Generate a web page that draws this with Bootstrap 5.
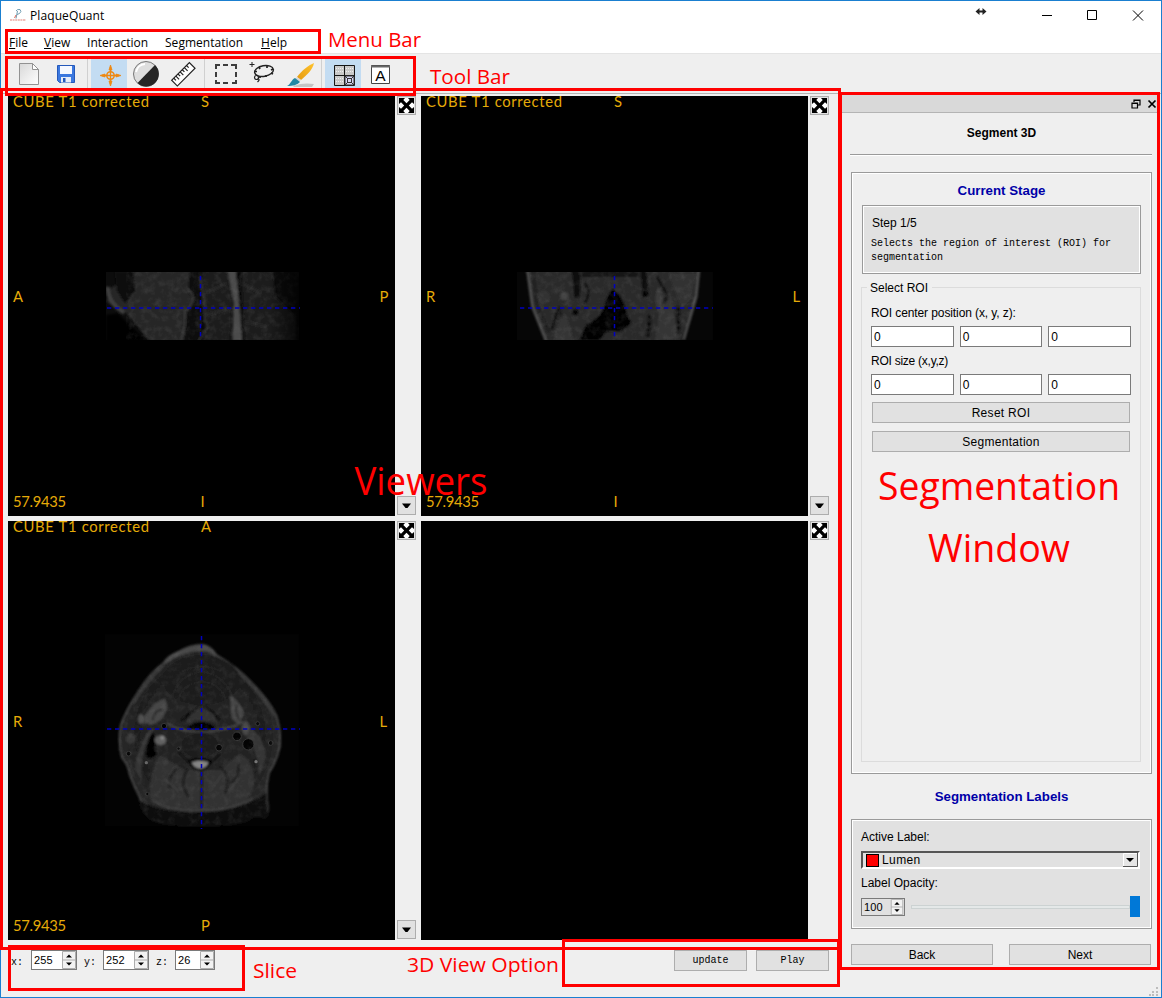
<!DOCTYPE html>
<html lang="en">
<head>
<meta charset="utf-8">
<title>PlaqueQuant</title>
<meta name="viewport" content="width=device-width, initial-scale=1">
<link href="https://cdn.jsdelivr.net/npm/bootstrap@5.3.0/dist/css/bootstrap.min.css" rel="stylesheet">
<style>
body{width:1162px;height:998px;overflow:hidden;background:#fff;font:12px/16px "Liberation Sans",Arial,sans-serif;color:#000}
svg{display:block}
.win{width:1162px;height:998px;border:1px solid #1a7fd0;background:#efefef}
.titlebar{height:29px;background:#fff;padding-left:9px;font-family:"Open Sans","Noto Sans",sans-serif}
.menus{height:23px;background:#fff;font-family:"Open Sans","Noto Sans",sans-serif;padding-left:8px;padding-top:3px}
.menus span{letter-spacing:.03px;white-space:nowrap}
.tools{height:41px;border-top:1px solid #e4e4e4;border-bottom:1px solid #b5b5b5;padding:5px 0 0 10px;gap:1px}
.tool{width:36px;height:30px}
.tool.on{background:#c3dcf2}
.vsep{width:1px;height:30px;background:#d0d0d0;margin:0 2px}
.views{width:838px;padding-top:2px;padding-left:7px}
.viewrow{height:420px;margin-bottom:5px}
.viewrow.low{height:419px;margin-bottom:0}
.side{width:26px;padding:0 0 1px 1.500px}
.sq{width:19px;height:19px;border:1px solid #adadad;background:#e1e1e1}
.mono{font-family:"Liberation Mono","DejaVu Sans Mono",monospace;font-size:10px}
.slicebar{height:31px;padding:10px 10px 0 3px}
.spin{height:20px;border:1px solid #7a7a7a;background:#fff;font-size:11px;letter-spacing:.15px;padding-left:2px}
.wbtn{height:21px;border:1px solid #adadad;background:#e1e1e1;border-radius:0;padding:1px 0 0;color:#000;font-size:12px;line-height:18px}
.wbtn.wide{letter-spacing:.3px}
.dock{width:317px}
.dockbar{height:18px;background:#d9d9d9;border-bottom:1px solid #b4b4b4;padding-right:2px;margin-top:1px;gap:6px}
.dockbody{padding:0 7px 0 9px}
.rule{height:2px;background:#9a9a9a;border-bottom:1px solid #fff;width:302px;margin-left:-1px}
.sunk{border:1px solid #9a9a9a;outline:1px solid #fff;outline-offset:-2px}
.hd{font-weight:700;font-size:13.3px;color:#0000a8;text-align:center}
.stepbox{background:#e1e1e1;height:69px;padding:9px 8px 0}
.group{position:relative;border:1px solid #dcdcdc;height:475px;padding:17px 9px 0;margin:13px 0 0 -1px}
.legendtxt{position:absolute;left:5px;top:-8px;background:#efefef;padding:0 4px 0 3px;line-height:16px}
.inp{height:21px;border:1px solid #7a7a7a;border-radius:0;background:#fff;padding:0 0 0 2px;line-height:20px;flex:1}
.labels{background:#e1e1e1;height:110px;padding:9px 10px 0 9px}
.combo{height:18px;border:2px solid;border-color:#555 #fff #fff #555;background:#e1e1e1;width:279px;line-height:15px}
.swatch{width:13px;height:13px;background:#f00;border:1px solid #000;margin:0 3px 0 3px}
.over{position:absolute;left:0;top:0;pointer-events:none}
.over text{font-family:"Open Sans","Noto Sans",sans-serif;fill:#f00}
.cv text{font-family:Lato,sans-serif;font-size:14.8px;fill:#e6ab08}
.cross{stroke:#0000c0;stroke-width:1.5;stroke-dasharray:4.3 3.7}
</style>
</head>
<body>
<svg width="0" height="0" style="position:absolute">
<defs>
<filter id="soft" x="-10%" y="-10%" width="120%" height="120%"><feGaussianBlur stdDeviation="2.500"/></filter>
<filter id="grain" x="0" y="0" width="100%" height="100%"><feTurbulence type="fractalNoise" baseFrequency=".05" numOctaves="4" seed="8"/><feColorMatrix values="0 0 0 0 .3  0 0 0 0 .3  0 0 0 0 .3  1.8 0 0 0 -.75"/></filter>
<linearGradient id="metal" x1="0" y1="0" x2="1" y2="1"><stop offset="0" stop-color="#d8d8d8"/><stop offset="1" stop-color="#fff"/></linearGradient>
<linearGradient id="bris" x1="1" y1="0" x2="0" y2="1"><stop offset="0" stop-color="#ffc32d"/><stop offset="1" stop-color="#e59a10"/></linearGradient>
<radialGradient id="tissue"><stop offset="0" stop-color="#262626"/><stop offset=".8" stop-color="#1f1f1f"/><stop offset="1" stop-color="#2a2a2a"/></radialGradient>
<linearGradient id="edge"><stop offset="0" stop-color="#000" stop-opacity="0"/><stop offset="1" stop-color="#000" stop-opacity=".75"/></linearGradient>
<clipPath id="cSag"><rect x="33" y="36" width="579" height="204"/></clipPath>
<clipPath id="cCor"><rect x="36" y="36" width="588" height="204"/></clipPath>
<clipPath id="cNeck"><path d="M64 36h520l-10 75-24 75-18 54H120L80 140z"/></clipPath>
<path id="head" d="M205 112Q215 92 250 78Q290 54 325 58Q350 62 365 88Q430 125 475 175Q525 225 546 270Q562 320 557 365Q548 410 524 445Q514 490 520 535Q524 575 508 579Q490 570 475 577Q440 603 320 602Q210 605 165 583Q135 560 133 520Q115 485 102 450Q98 420 79 400Q65 350 75 300Q90 255 130 195Q165 140 205 112Z"/>
<clipPath id="cHead"><use href="#head"/></clipPath>
<symbol id="expand" viewBox="0 0 17 17"><path d="M1 1h15v15H1z" fill="#fff"/><path d="M1 1h6L5.300 3 8.500 6.200 11.700 3 10 1h6v6l-2-1.700-3.200 3.200L14 11.700 16 10v6h-6l1.700-2-3.200-3.200L5.300 14 7 16H1v-6l2 1.700 3.200-3.200L3 5.300 1 7z"/></symbol>
<symbol id="down" viewBox="0 0 17 17"><path d="M4 6.500h9L9.500 11h-2z"/></symbol>
<symbol id="updown" viewBox="0 0 14 18"><path d="M.5.500h13v17H.5zM.5 9h13" fill="#f2f2f2" stroke="#adadad"/><path d="M4 6.500 7 3.500l3 3zM4 11.500l3 3 3-3z"/></symbol>
</defs>
</svg>

<div class="win d-flex flex-column">
  <header class="titlebar d-flex align-items-center">
    <svg width="16" height="16" viewBox="0 0 16 16" fill="none"><path d="M6 3q1-2 4-1.500 2 2-.5 4L7 6.500M7.500 3 6 10.500" stroke="#6f9db2" stroke-width="1"/><path d="M6 7 4.500 10" stroke="#df6a5c"/><path d="M0 12h16" stroke="#ecaaa4" stroke-dasharray="2 .6" stroke-width="1.500"/></svg>
    <span style="margin-left:4px;letter-spacing:.1px">PlaqueQuant</span>
    <svg class="ms-auto" width="186" height="28" viewBox="970 1 186 28" fill="none" stroke="#000"><path d="M978 10.500h6" stroke-width="2" stroke="#222"/><path d="m979.500 7-4 3.500 4 3.500zM982.500 7l4 3.500-4 3.500z" fill="#222" stroke="none"/><path d="M1042 14.500h10M1087.500 9.500h9v9h-9zM1133 9.500l10 10m0-10-10 10"/></svg>
    <i style="width:5px"></i>
  </header>
  <nav class="menus d-flex align-items-center">
    <span style="width:35px"><u>F</u>ile</span><span style="width:43px"><u>V</u>iew</span><span style="width:78px">Interaction</span><span style="width:96px">Segmentation</span><span><u>H</u>elp</span>
  </nav>
  <div class="tools d-flex">
    <div class="tool"><svg width="36" height="30" viewBox="11 59 36 30"><path d="M19.500 63.500h13l6 6v15h-19z" fill="url(#metal)" stroke="#929292"/><path d="M32.500 63.500v6h6z" fill="#fff" stroke="#929292"/></svg></div>
    <div class="tool"><svg width="36" height="30" viewBox="48 59 36 30"><path d="M57.500 65.500h17v17h-15l-2-2z" fill="#3b78df" stroke="#2458ba"/><path d="M60 66h12v8H60z" fill="#f5f8ff"/><path d="M61 77h10v5.500H61z" fill="#e7edf8"/><path d="M63 78h2.500v4H63z" fill="#2458ba"/></svg></div>
    <i class="vsep"></i>
    <div class="tool on"><svg width="36" height="30" viewBox="91 59 36 30" fill="none" stroke="#ee8812"><circle cx="110.500" cy="75.500" r="3.700" stroke-width="1.500"/><path d="M110.500 67v17M102 75.500h17" stroke-width="1.300"/><path d="m109 70 1.500-5 1.500 5zm0 11 1.500 5 1.500-5zm-4-7-5 1.500 5 1.500zm11 0 5 1.500-5 1.500z" fill="#ee8812" stroke-width=".8"/></svg></div>
    <div class="tool"><svg width="36" height="30" viewBox="128 59 36 30"><circle cx="146" cy="74" r="12.500" fill="#dedede" stroke="#777"/><path d="M155 65A12.500 12.500 0 0 1 137.500 83z" fill="#262626"/><path d="M136 72a10 10 0 0 1 9-8" fill="none" stroke="#fff" stroke-width="2"/></svg></div>
    <div class="tool"><svg width="36" height="30" viewBox="165 59 36 30"><g transform="rotate(-45 183 74)" fill="#fff" stroke="#222" stroke-width="1.200"><path d="M170.500 70.500h25v8h-25z"/><path d="M173.500 70.500v3m3-3v4.500m3-4.500v3m3-3v4.500m3-4.500v3m3-3v4.500m3-4.500v3"/></g></svg></div>
    <i class="vsep"></i>
    <div class="tool"><svg width="36" height="30" viewBox="208 59 36 30" fill="none" stroke="#3d3d3d" stroke-width="2"><path d="M216 69v-4h4m3 0h5m3 0h5v4m0 3v5m0 3v3h-4m-4 0h-5m-3 0h-4v-3m0-3v-5"/></svg></div>
    <div class="tool"><svg width="36" height="30" viewBox="245 59 36 30" fill="none" stroke="#222"><path d="M249.500 64.500h5M252 62v5"/><ellipse cx="264" cy="71" rx="9.500" ry="5.300" transform="rotate(-10 264 71)" stroke-width="1.400"/><circle cx="256.500" cy="77.500" r="2" stroke-width="1.200"/><path d="M258 78.500c2 1 1 2-.5 3.500" stroke-width="1.200"/><path d="M254 71.500h3m2-4.500 1 2m7-3v2m6 1-2 1m0 3 2 1m-7 1v2m-6-1v2" stroke-width="1.700"/></svg></div>
    <div class="tool"><svg width="36" height="30" viewBox="282 59 36 30"><path d="M293 86c8-3 15-3 21-2l-2 3h-18z" fill="#c5c5c5"/><path d="M314 63c-5 2-12 7-17 14l4 3c6-5 12-11 13-17z" fill="url(#bris)"/><path d="m297 77 4 3-2 2-4-3z" fill="#d9d9d9"/><path d="M295 78l5 4c-3 3-7 4-13 4 4-2 4-6 8-8z" fill="#2387a4"/></svg></div>
    <i class="vsep"></i>
    <div class="tool on"><svg width="36" height="30" viewBox="325 59 36 30" fill="none" stroke="#161616"><path d="M334.500 65.500h20v20h-20z" fill="#c9c9c9"/><path d="M336 68.500h18M336 71.500h18M336 78.500h8M336 81.500h8" stroke="#eee" stroke-dasharray="1 1"/><path d="M344.500 65v20M334 75.500h20"/><path d="M345 76h9v9h-9z" fill="#d5d5f3" stroke="#333"/><path d="M347.500 78.500h4v4h-4zM345 76l3 3m6-3-3 3m3 6-3-3m-6 3 3-3" stroke="#333"/></svg></div>
    <div class="tool"><svg width="36" height="30" viewBox="362 59 36 30"><path d="M371.500 65.500h18v18h-18z" fill="#fff" stroke="#444"/><path d="M371 66.500h19" stroke="#666" stroke-width="2"/><text x="380.500" y="81" text-anchor="middle" font-size="15.500" font-family="Liberation Sans, sans-serif">A</text></svg></div>
  </div>

  <div class="d-flex flex-grow-1">
    <main class="views">
      <div class="viewrow d-flex">
        <svg class="cv" width="387" height="420" viewBox="8 96 387 420"><path d="M8 96h387v420H8z"/>
          <g transform="translate(95 260) scale(.33333)"><g clip-path="url(#cSag)">
            <path d="M33 36h579v204H33z" fill="#0c0c0c"/>
            <g filter="url(#soft)"><path d="M110 30h180l-8 70 18 30-28 50-4 65H165L95 160 35 125 45 85 90 60z" fill="#262626"/><path d="M38 80q0 50 50 78" stroke="#404040" stroke-width="12" fill="none"/><path d="M60 36h55l5 55-30 40-25-40z" fill="#0e0e0e"/><path d="M320 30h80l12 80-6 135H325l10-60z" fill="#1e1e1e"/><path d="M286 30l-6 50 16 30-20 50-4 85h38l16-70-6-70-4-75z" fill="#080808"/><path d="M316 50l12 80 2 50 8 20-28 45" fill="none" stroke="#393939" stroke-width="5"/><path d="M280 90q24 20 8 45l-18 20v40l-12 45" fill="none" stroke="#393939" stroke-width="6"/><path d="M438 30h95l10 80 60 60v75H448z" fill="#1a1a1a"/><path d="M335 100l60-30M335 165l65-20M440 70l60 30M445 185l70 15" stroke="#272727" stroke-width="10"/><path d="M398 30l18 100-4 112h30l-10-112-10-100z" fill="#4b4b4b"/><path d="M425 30l12 100 10 112" fill="none" stroke="#080808" stroke-width="7"/><path d="M33 165l35-5 90 85H33z" fill="#030303"/></g>
            <rect x="95" y="36" width="517" height="204" filter="url(#grain)" opacity=".17"/><rect x="520" y="36" width="92" height="204" fill="url(#edge)"/></g></g>
          <path class="cross" d="M107 308h193M200.500 276v62"/>
          <text x="13" y="107" textLength="136">CUBE T1 corrected</text><text x="201" y="107">S</text><text x="13" y="302">A</text><text x="379.500" y="302">P</text><text x="13" y="507" textLength="53">57.9435</text><text x="200.500" y="507">I</text>
        </svg>
        <div class="side d-flex flex-column justify-content-between"><span class="sq"><svg width="17" height="17"><use href="#expand"/></svg></span><span class="sq"><svg width="17" height="17"><use href="#down"/></svg></span></div>
        <svg class="cv" width="387" height="420" viewBox="421 96 387 420"><path d="M421 96h387v420H421z"/>
          <g transform="translate(505 260) scale(.33333)"><g clip-path="url(#cCor)">
            <path d="M36 36h588v204H36z" fill="#060606"/>
            <g filter="url(#soft)"><path d="M64 30h520l-10 75-24 75-22 65H120L80 140z" fill="#2a2a2a"/><path d="M67 30l15 110 42 105M582 30l-8 80-38 130" fill="none" stroke="#525252" stroke-width="7"/><path d="M84 30l12 100 35 85" fill="none" stroke="#141414" stroke-width="5"/><path d="M200 30h24l4 80-20 5zM405 30h18l10 70-18 15z" fill="#101010"/><path d="M240 70q20 25 0 60M455 50l30 50-10 60M160 140l40 90 5 10M160 145l-20 65" fill="none" stroke="#101010" stroke-width="7"/><path d="M145 245l20-70q12-18 24 5l20 65zM450 245l15-100 35-40 20 130z" fill="#343434"/><path d="M324 86q-22 20-30 65-20 32-50 40l-20 50h60l20-26 48-2 30-28q-15-8-20-38-10-40-38-61z" fill="#050505"/><path d="M230 30h170v20H230z" fill="#131313"/><circle cx="178" cy="108" r="12" fill="#444"/><circle cx="115" cy="110" r="20" fill="#333"/><ellipse cx="462" cy="118" rx="10" ry="34" fill="#3b3b3b"/><circle cx="422" cy="101" r="10" fill="#050505"/><circle cx="211" cy="157" r="9" fill="#050505"/><path d="M520 140v80M435 165l-6 65" stroke="#0b0b0b" stroke-width="12" stroke-dasharray="14 5"/><path d="M490 40h85l-15 75-30 30z" fill="#333"/></g>
            <g clip-path="url(#cNeck)"><rect x="75" y="36" width="500" height="204" filter="url(#grain)" opacity=".17"/></g></g></g>
          <path class="cross" d="M520 308h193M614.500 276v62"/>
          <text x="426" y="107" textLength="136">CUBE T1 corrected</text><text x="614" y="107">S</text><text x="426" y="302">R</text><text x="792.500" y="302">L</text><text x="426" y="507" textLength="53">57.9435</text><text x="613.500" y="507">I</text>
        </svg>
        <div class="side d-flex flex-column justify-content-between"><span class="sq"><svg width="17" height="17"><use href="#expand"/></svg></span><span class="sq"><svg width="17" height="17"><use href="#down"/></svg></span></div>
      </div>
      <div class="viewrow low d-flex">
        <svg class="cv" width="387" height="419" viewBox="8 521 387 419"><path d="M8 521h387v419H8z"/>
          <g transform="translate(95 625) scale(.33333)"><path d="M30 28h582v575H30z" fill="#030303"/>
            <g filter="url(#soft)"><use href="#head" fill="url(#tissue)"/><g clip-path="url(#cHead)">
            <use href="#head" fill="none" stroke="#484848" stroke-width="9"/>
            <path d="M205 112Q260 70 325 70Q350 72 365 90" stroke="#484848" stroke-width="15" fill="none"/>
            <path d="M110 235Q150 170 205 115M540 270Q500 200 430 135" stroke="#383838" stroke-width="16" fill="none"/>
            <ellipse cx="320" cy="165" rx="115" ry="75" fill="#1c1c1c"/>
            <path d="M220 270q10-120 100-130 90 10 105 130M245 265q0-90 75-95 75 5 78 95M260 140q60-30 120 0" fill="none" stroke="#282828" stroke-width="4"/>
            <path d="M165 310q-45 70-45 125l22 35q-12-80 35-160zM470 310q45 40 42 90l-20 55q0-80-40-120z" fill="#353535"/>
            <path d="M195 390q-35 50-30 130 30 35 95 35h120q70-5 95-60 15-80-40-110-40 30-60 50h-105z" fill="#303030"/>
            <path d="M245 430q-30 30-20 60m55-60q-30 40 0 85m95-90q35 30 15 80m40-90q5 45-25 60M320 440v105" stroke="#171717" stroke-width="5" fill="none"/>
            <path d="M215 465l35 35M380 450l-35 50M430 460l-30 45" stroke="#424242" stroke-width="4"/>
            <path d="M125 520q70 48 190 40 110 0 200-55l5 75-70 25H160z" fill="#0c0c0c"/>
            <path d="M170 525q50 35 150 32 90 0 155-38" fill="none" stroke="#424242" stroke-width="5"/>
            <path d="M150 270l30-35 30-15 8 30-20 35-30 15-20-8zM405 210q30 20 42 55l-15 35-22-20z" fill="#474747"/>
            <path d="M173 285q5-30 30-32M425 240q-5 22 8 45" stroke="#222" stroke-width="5" fill="none"/>
            <ellipse cx="138" cy="282" rx="9" ry="15" fill="#505050"/><ellipse cx="452" cy="310" rx="11" ry="21" fill="#484848"/><circle cx="107" cy="342" r="15" fill="#393939"/>
            <path d="M255 285q35-35 65-42 40 10 55 40l-10 10q-20-28-45-32-25 5-42 32z" fill="#0a0a0a"/><path d="M265 300q25-45 55-55 32 10 55 55-60-30-110 0z" fill="#333"/>
            <path d="M276 308q42-35 86 0-45 22-86 0z" fill="#030303"/>
            <path d="M215 295q40 25 105 25 70 0 125-30" fill="none" stroke="#424242" stroke-width="6"/>
            <ellipse cx="315" cy="360" rx="55" ry="37" fill="#1c1c1c"/><path d="M250 380l30 30q35-20 70 0l25-25" stroke="#121212" stroke-width="10" fill="none"/>
            <path d="M280 405q36-10 70 0-5 30-38 33-25-6-32-33z" fill="#030303"/><path d="M290 412q25-10 50 0-4 18-25 19-20-3-25-19z" fill="#858585"/>
            <path d="M170 320q20 15 10 50l5 20-20 12q-20-8-10-40z" fill="#030303"/>
            <ellipse cx="196" cy="346" rx="17" ry="14" fill="#606060"/><circle cx="202" cy="338" r="6" fill="#888"/>
            </g></g>
            <g fill="#030303" stroke="#363636" stroke-width="3"><circle cx="426" cy="334" r="13"/><circle cx="460" cy="358" r="17"/><circle cx="372" cy="368" r="10"/><circle cx="207" cy="303" r="8"/><circle cx="251" cy="371" r="5"/><circle cx="527" cy="354" r="7"/><circle cx="488" cy="296" r="6"/><circle cx="101" cy="386" r="7"/><circle cx="157" cy="507" r="5"/></g>
            <circle cx="483" cy="410" r="5" fill="#777"/><circle cx="154" cy="413" r="5" fill="#666"/>
            <g clip-path="url(#cHead)"><rect x="60" y="50" width="510" height="555" filter="url(#grain)" opacity=".14"/></g>
          </g>
          <path class="cross" d="M107 729h193M201.500 636v193"/>
          <text x="13" y="532" textLength="136">CUBE T1 corrected</text><text x="201" y="532">A</text><text x="13" y="727">R</text><text x="379.500" y="727">L</text><text x="13" y="931" textLength="53">57.9435</text><text x="201" y="931">P</text>
        </svg>
        <div class="side d-flex flex-column justify-content-between"><span class="sq"><svg width="17" height="17"><use href="#expand"/></svg></span><span class="sq"><svg width="17" height="17"><use href="#down"/></svg></span></div>
        <svg width="387" height="419"><rect width="387" height="419"/></svg>
        <div class="side"><span class="sq d-block"><svg width="17" height="17"><use href="#expand"/></svg></span></div>
      </div>
      <div class="slicebar d-flex align-items-start">
        <span class="mono lh-lg" style="width:20px;padding-top:3px">x:</span><span class="spin d-flex justify-content-between align-items-center" style="width:46px">255<svg width="14" height="18"><use href="#updown"/></svg></span>
        <span class="mono lh-lg" style="width:26px;padding:3px 0 0 7px">y:</span><span class="spin d-flex justify-content-between align-items-center" style="width:46px">252<svg width="14" height="18"><use href="#updown"/></svg></span>
        <span class="mono lh-lg" style="width:26px;padding:3px 0 0 7px">z:</span><span class="spin d-flex justify-content-between align-items-center" style="width:40px">26<svg width="14" height="18"><use href="#updown"/></svg></span>
        <button class="wbtn mono ms-auto" style="width:73px;font-size:10px">update</button><button class="wbtn mono" style="width:73px;margin-left:9px;font-size:10px">Play</button>
      </div>
    </main>

    <aside class="dock ms-auto">
      <div class="dockbar d-flex justify-content-end align-items-center">
        <svg width="10" height="10" fill="none" stroke="#000"><path d="M3 3V1h6v5H7M3 1.500h6" stroke-width="1.200"/><path d="M1 4h5.500v5H1zM1 4.500h5.500" stroke-width="1.200"/></svg>
        <svg width="10" height="10" stroke="#000" stroke-width="1.700"><path d="m1.500 1.500 7 7m0-7-7 7"/></svg>
      </div>
      <div class="dockbody">
        <div class="text-center fw-bold" style="padding-top:12px;height:41px">Segment 3D</div>
        <div class="rule"></div>
        <section class="sunk" style="height:602px;margin-top:16px;padding:0 10px">
          <div class="hd" style="height:32px;padding-top:10px">Current Stage</div>
          <div class="stepbox sunk"><div style="padding-left:1px">Step 1/5</div><div class="mono" style="line-height:14px;margin-top:6px;white-space:nowrap">Selects the region of interest (ROI) for<br>segmentation</div></div>
          <div class="group">
            <span class="legendtxt">Select ROI</span>
            <div style="letter-spacing:-.1px">ROI center position (x, y, z):</div>
            <div class="d-flex" style="gap:6px;margin:5px 0 6px"><span class="inp">0</span><span class="inp">0</span><span class="inp">0</span></div>
            <div style="letter-spacing:-.25px">ROI size (x,y,z)</div>
            <div class="d-flex" style="gap:6px;margin:5px 0 7px"><span class="inp">0</span><span class="inp">0</span><span class="inp">0</span></div>
            <button class="wbtn wide d-block" style="width:258px;margin:0 0 8px 1px">Reset ROI</button>
            <button class="wbtn wide d-block" style="width:258px;margin-left:1px">Segmentation</button>
          </div>
        </section>
        <div class="hd" style="height:45px;padding-top:15px">Segmentation Labels</div>
        <section class="sunk labels">
          <div>Active Label:</div>
          <div class="combo d-flex align-items-center" style="margin:6px 0 6px"><i class="swatch"></i><span style="letter-spacing:.4px">Lumen</span><svg class="ms-auto" width="15" height="14"><path d="M0 0h15v14H0z" fill="#e6e6e6"/><path d="M.5 14V.500H15" fill="none" stroke="#fff"/><path d="M0 13.500h14.500V0" fill="none" stroke="#555"/><path d="M3 5h8L7 9z"/></svg></div>
          <div>Label Opacity:</div>
          <div class="d-flex align-items-center" style="margin-top:5px"><span class="spin d-flex justify-content-between align-items-center" style="width:44px;height:18px;background:#e1e1e1">100<svg width="14" height="16" preserveAspectRatio="none"><use href="#updown"/></svg></span><i style="width:219px;height:4px;margin-left:6px;border:1px solid #ccd2d2;background:#e4e8e8"></i><i style="width:10px;height:21px;background:#0078d7"></i></div>
        </section>
        <div class="d-flex justify-content-between" style="margin:15px 1px 0 0"><button class="wbtn" style="width:142px">Back</button><button class="wbtn" style="width:142px">Next</button></div>
      </div>
    </aside>
    <i style="width:2px"></i>
  </div>
</div>

<svg class="over" width="1162" height="998">
  <g fill="#bdbdbd"><path d="M1156 987h2v2h-2zM1156 991h2v2h-2zM1152 991h2v2h-2zM1156 994h2v2h-2zM1152 994h2v2h-2zM1149 994h2v2h-2z"/></g>
  <g fill="none" stroke="#f00" stroke-width="3"><rect x="6.500" y="30.500" width="313" height="22"/><rect x="6.500" y="57.500" width="408" height="37"/><rect x="1.500" y="89.500" width="838" height="859"/><rect x="840.500" y="93.500" width="318" height="875"/><rect x="9.500" y="946.500" width="234" height="43"/><rect x="563.500" y="940.500" width="275" height="45"/></g>
  <g font-size="20"><text x="328" y="47" textLength="93" lengthAdjust="spacingAndGlyphs">Menu Bar</text><text x="430" y="84" textLength="80" lengthAdjust="spacingAndGlyphs">Tool Bar</text><text x="253" y="978" textLength="44" lengthAdjust="spacingAndGlyphs">Slice</text><text x="407" y="972" textLength="152" lengthAdjust="spacingAndGlyphs">3D View Option</text></g>
  <g font-size="38"><text x="354.500" y="495" textLength="133" lengthAdjust="spacingAndGlyphs">Viewers</text><text x="878" y="500" textLength="242" lengthAdjust="spacingAndGlyphs">Segmentation</text><text x="928" y="562" textLength="142" lengthAdjust="spacingAndGlyphs">Window</text></g>
</svg>
<script src="https://cdn.jsdelivr.net/npm/bootstrap@5.3.0/dist/js/bootstrap.bundle.min.js"></script>
</body>
</html>
